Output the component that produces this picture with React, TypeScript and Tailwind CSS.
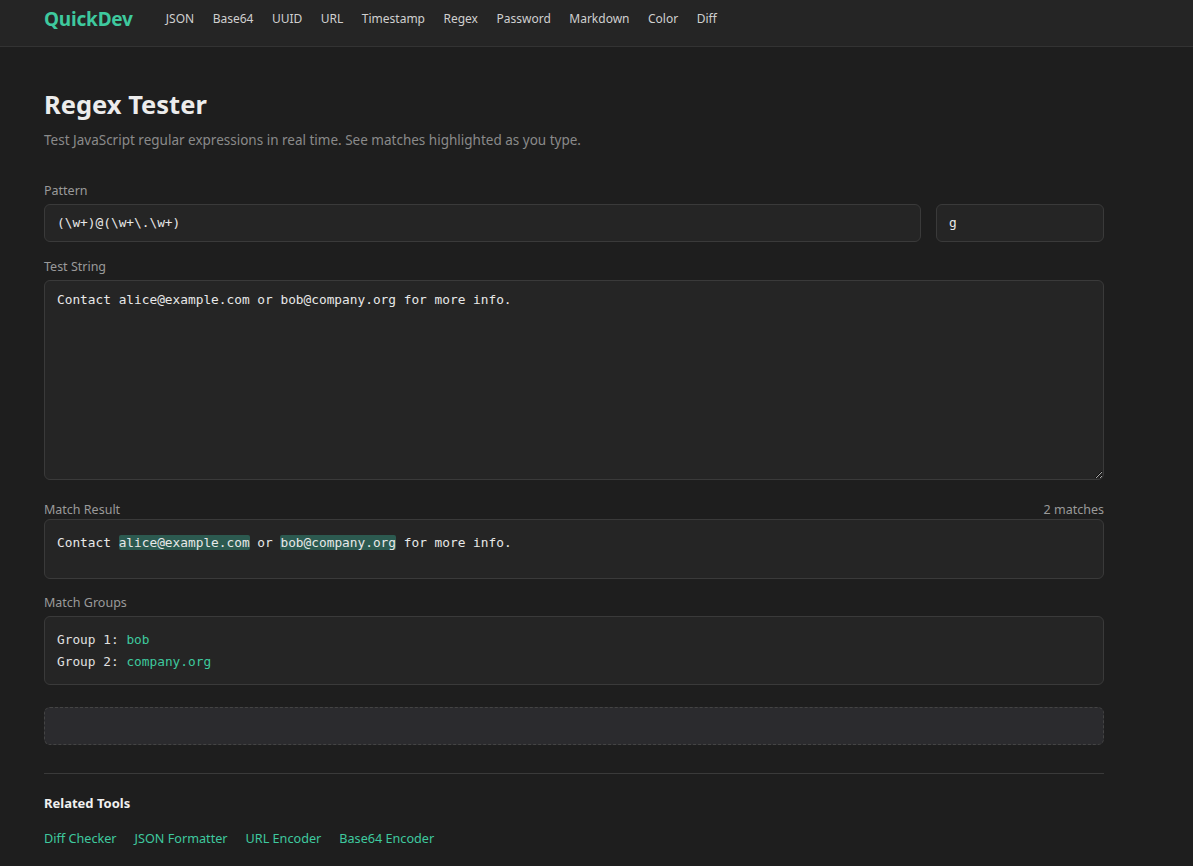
import { useMemo, useState } from 'react'

const NAV = ['JSON', 'Base64', 'UUID', 'URL', 'Timestamp', 'Regex', 'Password', 'Markdown', 'Color', 'Diff']
const RELATED = ['Diff Checker', 'JSON Formatter', 'URL Encoder', 'Base64 Encoder']

const sans = "font-['Segoe_UI','Noto_Sans','Open_Sans',sans-serif]"
const mono = "font-['Consolas','DejaVu_Sans_Mono','Liberation_Mono',monospace]"

export default function App() {
  const [pattern, setPattern] = useState('(\\w+)@(\\w+\\.\\w+)')
  const [flags, setFlags] = useState('g')
  const [text, setText] = useState('Contact alice@example.com or bob@company.org for more info.')

  // split the test string into plain / matched pieces and keep the last match's groups
  const { parts, count, groups } = useMemo(() => {
    const out: { t: string; hit: boolean }[] = []
    let groups: string[] = []
    let count = 0
    try {
      const re = new RegExp(pattern, flags.includes('g') ? flags : flags + 'g')
      let last = 0
      let m: RegExpExecArray | null
      while ((m = re.exec(text)) !== null) {
        if (m[0] === '') {
          re.lastIndex++
          continue
        }
        if (m.index > last) out.push({ t: text.slice(last, m.index), hit: false })
        out.push({ t: m[0], hit: true })
        groups = m.slice(1)
        last = m.index + m[0].length
        count++
      }
      if (last < text.length) out.push({ t: text.slice(last), hit: false })
    } catch {
      out.push({ t: text, hit: false })
    }
    return { parts: out, count, groups }
  }, [pattern, flags, text])

  return (
    <div className={`min-h-screen bg-[#1e1e1e] text-[#e0e0e0] ${sans}`}>
      <header className="h-[47px] bg-[#252525] border-b border-[#333]">
        <div className="flex items-center h-[38px] pl-[44px]">
          <span className="text-[19px] font-bold text-[#3ec99e] tracking-[-0.2px] mr-[33px]">QuickDev</span>
          <nav className="flex gap-[18.5px] text-[12px] text-[#d0d0d0]">
            {NAV.map((n) => (
              <a key={n} href="#" className="hover:text-white">{n}</a>
            ))}
          </nav>
        </div>
      </header>

      <main className="w-[1060px] ml-[44px] pt-[40px] pb-[20px]">
        <h1 className="text-[25.5px] font-bold text-[#ececec] leading-[34px]">Regex Tester</h1>
        <p className="mt-[9px] text-[13.5px] leading-[20px] text-[#8a8a8a]">
          Test JavaScript regular expressions in real time. See matches highlighted as you type.
        </p>

        <label className="block mt-[32px] mb-[3px] text-[12.5px] text-[#9a9a9a]">Pattern</label>
        <div className="flex gap-[15px]">
          <input
            value={pattern}
            onChange={(e) => setPattern(e.target.value)}
            className={`flex-1 h-[38px] px-[12px] rounded-[6px] bg-[#252525] border border-[#3a3a3a] text-[12.8px] text-[#e8e8e8] outline-none ${mono}`}
          />
          <input
            value={flags}
            onChange={(e) => setFlags(e.target.value)}
            className={`w-[168px] h-[38px] px-[12px] rounded-[6px] bg-[#252525] border border-[#3a3a3a] text-[12.8px] text-[#e8e8e8] outline-none ${mono}`}
          />
        </div>

        <label className="block mt-[16px] mb-[3px] text-[12.5px] text-[#9a9a9a]">Test String</label>
        <textarea
          value={text}
          onChange={(e) => setText(e.target.value)}
          className={`block w-full h-[200px] px-[12px] py-[9px] rounded-[6px] bg-[#252525] border border-[#3a3a3a] text-[12.8px] leading-[20px] text-[#e8e8e8] outline-none ${mono}`}
        />

        <div className="flex justify-between mt-[21px] mb-[0px] text-[12.5px] text-[#9a9a9a]">
          <span>Match Result</span>
          <span>{count} matches</span>
        </div>
        <div className={`h-[60px] px-[12px] py-[13px] rounded-[6px] bg-[#252525] border border-[#3a3a3a] text-[12.8px] leading-[20px] text-[#e8e8e8] whitespace-pre ${mono}`}>
          {parts.map((p, i) =>
            p.hit ? (
              <mark key={i} className="bg-[#2c5a50] text-[#e8e8e8] rounded-[2px]">{p.t}</mark>
            ) : (
              <span key={i}>{p.t}</span>
            )
          )}
        </div>

        <label className="block mt-[15px] mb-[3px] text-[12.5px] text-[#9a9a9a]">Match Groups</label>
        <div className={`px-[12px] pt-[12px] pb-[11px] rounded-[6px] bg-[#252525] border border-[#3a3a3a] text-[12.8px] leading-[22px] text-[#e0e0e0] ${mono}`}>
          {groups.map((g, i) => (
            <div key={i}>
              Group {i + 1}: <span className="text-[#3ec99e]">{g}</span>
            </div>
          ))}
        </div>

        <div className="mt-[22px] h-[38px] rounded-[6px] bg-[#2b2b2e] border border-dashed border-[#444]" />

        <hr className="mt-[28px] border-0 border-t border-[#3a3a3a]" />

        <h3 className="mt-[20px] text-[13px] font-bold text-[#f0f0f0]">Related Tools</h3>
        <div className="flex gap-[18px] mt-[15px] text-[12.65px] text-[#3ec99e]">
          {RELATED.map((r) => (
            <a key={r} href="#" className="hover:underline">{r}</a>
          ))}
        </div>
      </main>
    </div>
  )
}
